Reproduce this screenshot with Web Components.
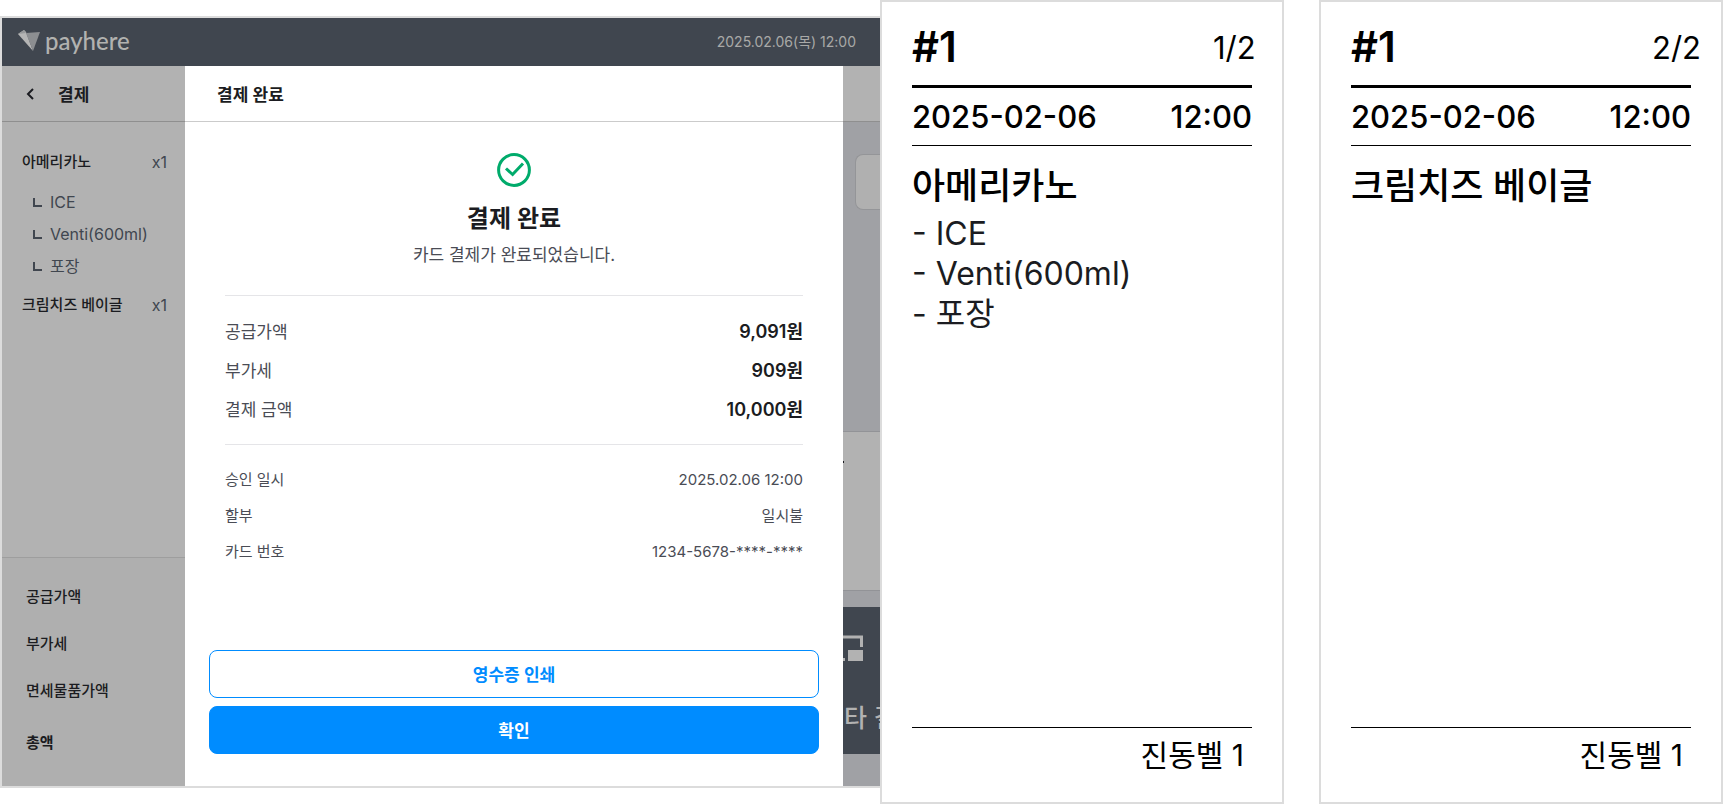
<!DOCTYPE html>
<html lang="ko">
<head>
<meta charset="utf-8">
<meta name="viewport" content="width=device-width, initial-scale=1">
<title>결제 완료</title>
<style>
body { margin: 0; background: #fff; font-family: Inter, "Noto Sans CJK KR", sans-serif; color: #1b1c21; }
</style>
</head>
<body>
<order-board></order-board>

<script>
const define = (name, html) => {
  const template = document.createElement('template');
  template.innerHTML = html;
  customElements.define(name, class extends HTMLElement {
    constructor() {
      super();
      this.attachShadow({ mode: 'open' }).append(template.content.cloneNode(true));
    }
  });
};

define('detail-row', `
<style>
:host { display: flex; justify-content: space-between; align-items: center; font-size: 17px; line-height: 24px; color: #4a4c55; }
.value { color: #1b1c21; font-size: 18px; font-weight: 600; }
:host([small]) { font-size: 15px; }
:host([small]) .value { color: inherit; font-size: 15px; font-weight: 400; }
</style>
<slot></slot><span class="value"><slot name="value"></slot></span>`);

define('app-button', `
<style>
:host { display: block; }
button { display: block; width: 100%; height: 48px; padding: 0 0 2px; border: 1px solid #008cff; border-radius: 8px; background: #fff; color: #008cff; font: inherit; font-size: 17px; font-weight: 600; cursor: pointer; }
:host([primary]) button { background: #008cff; color: #fff; }
</style>
<button type="button"><slot></slot></button>`);

define('top-bar', `
<style>
:host { display: flex; justify-content: space-between; align-items: center; height: 48px; padding: 0 24px 0 16px; background: #40464f; color: #a9a9a7; }
.brand { display: flex; align-items: center; gap: 4px; padding-bottom: 2px; font: 500 24px/30px Lato, sans-serif; color: #b2b2b0; }
time { padding-bottom: 2px; font-size: 14px; }
</style>
<span class="brand"><svg width="23" height="22" viewBox="0 0 23 22" aria-hidden="true"><path d="M0 4 6 0 8 2 15 21Z" fill="#b5b5b5"/><path d="M8 3 22 2 15 21Z" fill="#8c8e91"/><path d="M0 4 6 0 8 3Z" fill="#96989a"/></svg>payhere</span>
<time datetime="2025-02-06T12:00">2025.02.06(목) 12:00</time>`);

define('order-option', `
<style>
:host { display: flex; align-items: center; gap: 8px; padding-left: 11px; font-size: 16px; line-height: 32px; color: #40464f; }
</style>
<svg width="9" height="9" viewBox="0 0 9 9" aria-hidden="true"><path d="M1 0V8H9" fill="none" stroke="currentColor" stroke-width="2"/></svg><slot></slot>`);

define('order-item', `
<style>
:host { display: block; font-size: 15px; line-height: 24px; }
.line { display: flex; justify-content: space-between; font-weight: 500; }
.qty { color: #40464f; font-size: 16px; font-weight: 400; }
.options { padding-top: 12px; }
:host([plain]) .options { display: none; }
</style>
<div class="line"><slot></slot><span class="qty">x1</span></div>
<div class="options"><slot name="option"></slot></div>`);

define('order-sidebar', `
<style>
:host { display: flex; flex-direction: column; background: #b2b2b2; }
header { display: flex; align-items: center; gap: 23px; height: 55px; padding-left: 24px; border-bottom: 1px solid #8f8f8f; }
h2 { margin: 0; font-size: 17px; font-weight: 700; }
button { display: flex; padding: 0; border: 0; background: none; color: #1b1c21; }
.items { flex: 1; display: flex; flex-direction: column; gap: 11px; padding: 28px 18px 24px 20px; }
.totals { display: flex; flex-direction: column; gap: 23px; padding: 27px 24px 31px; border-top: 1px solid #9e9e9e; background: #afafaf; font-size: 15px; line-height: 24px; font-weight: 500; }
.sum { padding-top: 5px; font-weight: 700; }
</style>
<header><button type="button" aria-label="뒤로"><svg width="9" height="12" viewBox="0 0 9 12"><path d="M7 1 2 6 7 11" fill="none" stroke="currentColor" stroke-width="2"/></svg></button><h2>결제</h2></header>
<div class="items">
  <order-item>아메리카노<order-option slot="option">ICE</order-option><order-option slot="option">Venti(600ml)</order-option><order-option slot="option">포장</order-option></order-item>
  <order-item plain>크림치즈 베이글</order-item>
</div>
<div class="totals"><div>공급가액</div><div>부가세</div><div>면세물품가액</div><div class="sum">총액</div></div>`);

define('payment-dialog', `
<style>
:host { display: flex; flex-direction: column; background: #fff; }
header { display: flex; align-items: center; height: 55px; padding-left: 32px; border-bottom: 1px solid #cbcbcb; }
h2 { margin: 0; font-size: 17px; font-weight: 600; }
.status { display: flex; flex-direction: column; align-items: center; padding: 31px 0 27px; text-align: center; }
h1 { margin: 16px 0 7px; font-size: 24px; line-height: 32px; font-weight: 600; }
p { margin: 0; font-size: 17px; line-height: 26px; color: #4a4c55; }
.group { display: flex; flex-direction: column; gap: 15px; margin: 0 40px; padding: 24px 0 22px; border-top: 1px solid #e5e5e8; }
.minor { gap: 12px; padding-top: 23px; }
.actions { display: flex; flex-direction: column; gap: 8px; margin-top: auto; padding: 24px 24px 32px; }
</style>
<header><h2>결제 완료</h2></header>
<div class="status">
  <svg width="34" height="34" viewBox="0 0 34 34" fill="none" stroke="#00ab6b" stroke-width="3" aria-hidden="true"><circle cx="17" cy="17" r="15.4"/><path d="m9 15.5 6.6 6L26 10.5"/></svg>
  <h1>결제 완료</h1><p>카드 결제가 완료되었습니다.</p>
</div>
<div class="group">
  <detail-row>공급가액<span slot="value">9,091원</span></detail-row>
  <detail-row>부가세<span slot="value">909원</span></detail-row>
  <detail-row>결제 금액<span slot="value">10,000원</span></detail-row>
</div>
<div class="group minor">
  <detail-row small>승인 일시<span slot="value">2025.02.06 12:00</span></detail-row>
  <detail-row small>할부<span slot="value">일시불</span></detail-row>
  <detail-row small>카드 번호<span slot="value">1234-5678-****-****</span></detail-row>
</div>
<div class="actions"><app-button>영수증 인쇄</app-button><app-button primary>확인</app-button></div>`);

define('pos-backdrop', `
<style>
:host { display: flex; flex-direction: column; overflow: hidden; background: #a0a1a5; }
.bar { height: 55px; background: #b2b2b2; border-bottom: 1px solid #8f8f8f; }
.field { box-sizing: border-box; height: 56px; margin: 32px 0 0 12px; border: 1px solid #949598; border-right: 0; border-radius: 8px 0 0 8px; background: #b0b0b0; }
.sheet { box-sizing: border-box; height: 160px; margin-top: auto; padding-top: 29px; border: solid #929397; border-width: 1px 0; background: #b2b2b2; }
.sheet::before { content: ""; display: block; width: 1px; height: 2px; background: #1b1c21; }
.pay { box-sizing: border-box; display: flex; flex-direction: column; align-items: flex-start; gap: 38px; height: 147px; margin: 16px 0 32px; padding: 28px 0 0; background: #40464f; color: #b2b2b2; font-size: 25px; line-height: 36px; font-weight: 500; white-space: nowrap; }
.pay span { padding-left: 1px; }
</style>
<div class="bar"></div><div class="field"></div><div class="sheet"></div>
<div class="pay"><svg width="21" height="27" viewBox="0 0 21 27" aria-hidden="true"><path d="M0 2H18.5V12" fill="none" stroke="#b2b2b2" stroke-width="3"/><path d="M5 15H20V26H5ZM0 23H2V26H0Z" fill="#b2b2b2"/></svg><span>타 결제</span></div>`);

define('pos-screen', `
<style>
:host { display: flex; flex-direction: column; margin: 16px 0; border: 2px solid #dcdcdc; border-right: 0; }
.body { flex: 1; display: grid; grid-template-columns: 183px minmax(0, 1fr) 37px; }
</style>
<top-bar></top-bar>
<div class="body"><order-sidebar></order-sidebar><payment-dialog></payment-dialog><pos-backdrop></pos-backdrop></div>`);

define('order-ticket', `
<style>
:host { box-sizing: border-box; display: flex; flex-direction: column; padding: 24px 30px 20px; border: 2px solid #dcdcdc; background: #fff; color: #000; }
.top { display: flex; justify-content: space-between; align-items: center; height: 42px; padding-bottom: 17px; margin-right: -3px; }
h2 { margin: 0; font-size: 42px; line-height: 42px; font-weight: 600; }
.page { width: 42px; font-size: 31px; white-space: nowrap; }
.when { display: flex; justify-content: space-between; border-top: 3px solid #000; border-bottom: 1px solid #000; font-size: 31px; line-height: 57px; font-weight: 500; }
h3 { margin: 15px 0 3px; font-size: 36px; line-height: 50px; font-weight: 500; }
.options { font-size: 32px; line-height: 40px; color: #1b1c21; }
footer { margin-top: auto; padding: 1px 8px 0 0; border-top: 1px solid #000; font-size: 30px; line-height: 53px; text-align: right; }
</style>
<div class="top"><h2>#1</h2><span class="page"><slot name="page"></slot></span></div>
<div class="when"><span>2025-02-06</span><span>12:00</span></div>
<h3><slot></slot></h3>
<div class="options"><slot name="option"></slot></div>
<footer>진동벨 1</footer>`);

define('order-board', `
<style>
:host { display: grid; grid-template-columns: minmax(0, 1fr) 404px 439px; min-height: 100vh; }
order-ticket + order-ticket { margin-left: 35px; }
</style>
<pos-screen></pos-screen>
<order-ticket><span slot="page">1/2</span>아메리카노<div slot="option">- ICE</div><div slot="option">- Venti(600ml)</div><div slot="option">- 포장</div></order-ticket>
<order-ticket><span slot="page">2/2</span>크림치즈 베이글</order-ticket>`);
</script>
</body>
</html>
